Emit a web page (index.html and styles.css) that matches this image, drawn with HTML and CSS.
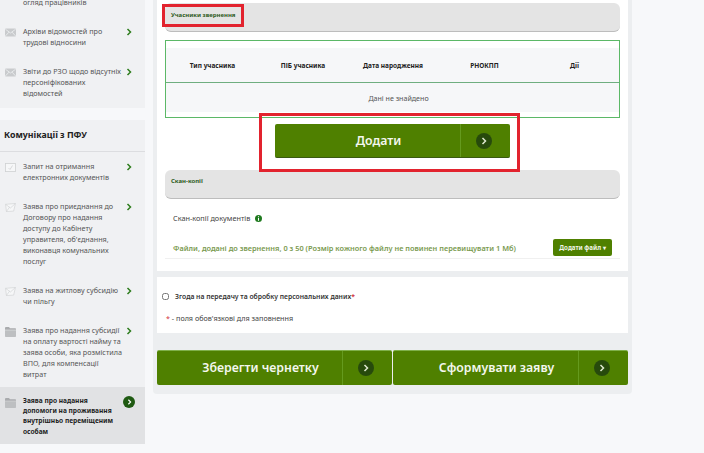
FILE: index.html
```html
<!DOCTYPE html>
<html>
<head>
    <title>Заява</title>
    <meta http-equiv="Content-Type" content="text/html; charset=UTF-8">
    <link rel="stylesheet" href="styles.css">
</head>
<body>
    <svg class="defs" width="0" height="0">
        <symbol id="i-mail" viewBox="0 0 11 8">
            <rect width="11" height="8" rx="1" fill="#c9cbcd"/>
            <path d="M0.5 0.8 5.5 4.5 10.5 0.8M0.5 7.4 4 3.6M10.5 7.4 7 3.6" fill="none" stroke="#eef0f1" stroke-width="0.8"/>
        </symbol>
        <symbol id="i-open" viewBox="0 0 12 10">
            <path d="M0.5 1.5 11.5 0.5 9.5 9 1.5 9.5Z" fill="#f6f7f8" stroke="#cfd1d3" stroke-width="0.7"/>
            <path d="M0.5 1.5 6 5.5 11.5 0.5M1.5 9.5 5 4.5" fill="none" stroke="#cfd1d3" stroke-width="0.7"/>
        </symbol>
        <symbol id="i-doc" viewBox="0 0 11 9">
            <rect x="0.4" y="0.4" width="10.2" height="8.2" fill="#f6f7f8" stroke="#cfd1d3" stroke-width="0.8"/>
            <path d="M3.5 5 5 6.5 7.5 2.5" fill="none" stroke="#cfd1d3" stroke-width="0.8"/>
        </symbol>
        <symbol id="i-folder" viewBox="0 0 11 10">
            <path d="M0 1.2C0 0.5 0.5 0 1.2 0H4L5 1.2H10C10.6 1.2 11 1.6 11 2.2V2.8H0Z" fill="#a9abad"/>
            <path d="M0 3.3H11V9C11 9.6 10.6 10 10 10H1C0.4 10 0 9.6 0 9Z" fill="#bdbfc1"/>
        </symbol>
        <symbol id="i-chev" viewBox="0 0 6 8">
            <path d="M1.5 1 4.5 4 1.5 7" fill="none" stroke="currentColor" stroke-width="1.5"/>
        </symbol>
    </svg>

    <aside class="sidebar">
        <section class="side-box">
            <div class="side-item">
                <span class="side-icon"></span>
                <span class="side-text">огляд працівників</span>
            </div>
            <div class="side-item">
                <span class="side-icon"><svg class="ic-mail"><use href="#i-mail"/></svg></span>
                <span class="side-text">Архіви відомостей про<br>трудові відносини</span>
                <svg class="chev"><use href="#i-chev"/></svg>
            </div>
            <div class="side-item">
                <span class="side-icon"><svg class="ic-mail"><use href="#i-mail"/></svg></span>
                <span class="side-text">Звіти до РЗО щодо відсутніх<br>персоніфікованих<br>відомостей</span>
                <svg class="chev"><use href="#i-chev"/></svg>
            </div>
        </section>

        <section class="side-box side-box-2">
            <h3 class="side-title">Комунікації з ПФУ</h3>
            <div class="side-item">
                <span class="side-icon"><svg class="ic-mail"><use href="#i-doc"/></svg></span>
                <span class="side-text">Запит на отримання<br>електронних документів</span>
                <svg class="chev"><use href="#i-chev"/></svg>
            </div>
            <div class="side-item">
                <span class="side-icon"><svg class="ic-mail"><use href="#i-open"/></svg></span>
                <span class="side-text">Заява про приєднання до<br>Договору про надання<br>доступу до Кабінету<br>управителя, об'єднання,<br>виконавця комунальних<br>послуг</span>
                <svg class="chev"><use href="#i-chev"/></svg>
            </div>
            <div class="side-item">
                <span class="side-icon"><svg class="ic-mail"><use href="#i-open"/></svg></span>
                <span class="side-text">Заява на житлову субсидію<br>чи пільгу</span>
                <svg class="chev"><use href="#i-chev"/></svg>
            </div>
            <div class="side-item">
                <span class="side-icon"><svg class="ic-folder"><use href="#i-folder"/></svg></span>
                <span class="side-text">Заява про надання субсидії<br>на оплату вартості найму та<br>заява особи, яка розмістила<br>ВПО, для компенсації<br>витрат</span>
                <svg class="chev"><use href="#i-chev"/></svg>
            </div>
            <div class="side-item active">
                <span class="side-icon"><svg class="ic-folder"><use href="#i-folder"/></svg></span>
                <span class="side-text">Заява про надання<br>допомоги на проживання<br>внутрішньо переміщеним<br>особам</span>
                <span class="round-chev small"><svg class="chev"><use href="#i-chev"/></svg></span>
            </div>
        </section>
    </aside>

    <main class="content">
        <div class="panel panel-main">
            <div class="block-head">
                <span>Учасники звернення</span>
                <div class="red-mark mark-head"></div>
            </div>

            <div class="grid-box">
                <div class="grid-row grid-top">
                    <b>Тип учасника</b>
                    <b>ПІБ учасника</b>
                    <b>Дата народження</b>
                    <b>РНОКПП</b>
                    <b>Дії</b>
                </div>
                <div class="grid-empty">Дані не знайдено</div>
            </div>

            <div class="add-row">
                <button class="btn-big add-btn">
                    <span class="btn-label">Додати</span>
                    <span class="btn-arrow"><span class="round-chev"><svg class="chev"><use href="#i-chev"/></svg></span></span>
                </button>
                <div class="red-mark mark-add"></div>
            </div>

            <div class="block-head block-head-2">
                <span>Скан-копії</span>
            </div>

            <div class="scan-title">
                Скан-копії документів
                <svg class="info" viewBox="0 0 8 8"><circle cx="4" cy="4" r="4" fill="#1f7a1f"/><path d="M4 1.5V2.5M4 3.4V6.5" stroke="#fff" stroke-width="1.2"/></svg>
            </div>

            <div class="files-row">
                <span class="files-text">Файли, додані до звернення, 0 з 50 (Розмір кожного файлу не повинен перевищувати 1 Мб)</span>
                <button class="btn-small">Додати файл ▾</button>
            </div>
        </div>

        <div class="panel panel-agree">
            <label class="agree">
                <input type="checkbox">
                <span>Згода на передачу та обробку персональних даних<i>*</i></span>
            </label>
            <div class="required"><i>*</i> - поля обов'язкові для заповнення</div>
        </div>

        <div class="actions">
            <button class="btn-big">
                <span class="btn-label">Зберегти чернетку</span>
                <span class="btn-arrow"><span class="round-chev"><svg class="chev"><use href="#i-chev"/></svg></span></span>
            </button>
            <button class="btn-big">
                <span class="btn-label">Сформувати заяву</span>
                <span class="btn-arrow"><span class="round-chev"><svg class="chev"><use href="#i-chev"/></svg></span></span>
            </button>
        </div>
    </main>
</body>
</html>
```

FILE: styles.css
```css
html, body {
    height: 100%;
}
body {
    display: flex;
    align-items: flex-start;
    margin: 0;
    height: 453px;
    overflow: hidden;
    background: #f7f8fa;
    color: #333;
    font-family: "Noto Sans", "Open Sans", sans-serif;
    font-size: 7.2px;
}
.defs {
    position: absolute;
}

/* sidebar */
.sidebar {
    flex: none;
    width: 145px;
    margin-top: -3px;
}
.side-box {
    background: #f0f1f3;
}
.side-box-2 {
    margin-top: 12px;
}
.side-title {
    margin: 0;
    padding: 7px 4px;
    height: 17px;
    line-height: 17px;
    font-size: 8.8px;
    font-weight: 700;
    color: #222;
    border-bottom: 1px solid #dcdde0;
}
.side-item {
    display: flex;
    align-items: flex-start;
    padding: 9px 13px 9px 5px;
    line-height: 11px;
    color: #555;
}
.side-box > .side-item:first-child {
    padding-top: 0;
}
.side-icon {
    flex: none;
    width: 18px;
    padding-top: 2px;
}
.side-text {
    flex: 1;
    white-space: nowrap;
}
.ic-mail {
    display: block;
    width: 11px;
    height: 9px;
}
.ic-folder {
    display: block;
    width: 11px;
    height: 10px;
}
.chev {
    flex: none;
    width: 6px;
    height: 8px;
    margin: 2px 0 0 4px;
    color: #2f7d1e;
}
.side-item.active {
    margin-top: -2px;
    padding: 9px 10px 7px 5px;
    background: #e1e2e4;
    line-height: 10.2px;
    font-size: 6.6px;
    font-weight: 700;
    color: #222;
}
.round-chev {
    display: flex;
    flex: none;
    align-items: center;
    justify-content: center;
    width: 16px;
    height: 16px;
    border-radius: 50%;
    background: #274a0c;
}
.round-chev .chev {
    margin: 0;
    color: #dfe8d0;
}
.round-chev.small {
    width: 12px;
    height: 12px;
    margin: 0;
    background: #1f5a12;
}
.round-chev.small .chev {
    width: 5px;
    height: 6px;
    color: #fff;
}

/* main column */
.content {
    flex: none;
    width: 471px;
    margin-left: 8px;
    padding: 0 4px 9px;
    background: #eceef0;
    border-radius: 0 0 4px 4px;
}
.panel {
    background: #fff;
}
.panel-main {
    position: relative;
    height: 268px;
    padding: 3px 8px 0 8px;
}
.panel-agree {
    margin-top: 6px;
    height: 56px;
    padding: 0 5px;
}
.block-head {
    position: relative;
    height: 28px;
    padding-left: 6px;
    background: #e4e4e4;
    border-bottom: 1px solid #bdbdbd;
    border-radius: 6px;
    font-size: 6px;
    font-weight: 700;
    line-height: 24px;
    color: #2d5a1b;
}
.block-head-2 {
    margin-top: 12px;
    line-height: 22px;
}
.red-mark {
    position: absolute;
    z-index: 2;
    box-sizing: border-box;
    border: 3px solid #e2232e;
    pointer-events: none;
}
.mark-head {
    left: -3px;
    top: 1px;
    width: 82px;
    height: 23px;
}
.mark-add {
    left: 94px;
    top: -11px;
    width: 261px;
    height: 59px;
}

/* participants table */
.grid-box {
    margin-top: 8px;
    height: 76px;
    border: 1px solid #5cb867;
    background: #fff;
}
.grid-row {
    display: grid;
    grid-template-columns: 93px 88px 92px 91px 89px;
    align-items: center;
    height: 34px;
    margin-top: 7px;
    background: #f6f7f9;
    border-bottom: 1px solid #6fae80;
    text-align: center;
    font-size: 6.5px;
    color: #222;
}
.grid-empty {
    height: 28px;
    padding: 1px 0 0 12px;
    line-height: 28px;
    background: #f6f7f9;
    text-align: center;
    font-size: 7.1px;
    color: #555;
}

/* buttons */
.btn-big {
    display: flex;
    flex: none;
    align-items: stretch;
    width: 235px;
    height: 35px;
    padding: 0;
    border: none;
    border-top: 1px solid #7fb04a;
    border-radius: 2px;
    background: #4f8000;
    color: #f4f7ee;
    font-family: inherit;
    font-size: 12.3px;
    font-weight: 600;
}
.btn-label {
    flex: 1;
    padding-left: 22px;
    line-height: 33px;
    text-align: center;
}
.btn-arrow {
    display: flex;
    flex: none;
    align-items: center;
    justify-content: center;
    box-sizing: border-box;
    width: 50px;
    padding-right: 4px;
    border-left: 1px solid #659a1e;
}
.add-row {
    position: relative;
    margin-top: 6px;
    padding-left: 110px;
}
.add-btn {
    height: 34px;
    border: none;
    border-bottom: 1px solid #3a5a12;
}
.scan-title {
    display: flex;
    align-items: center;
    gap: 5px;
    margin-top: 13px;
    padding-left: 8px;
    height: 12px;
    font-size: 7.3px;
    color: #444;
}
.info {
    width: 7px;
    height: 7px;
}
.files-row {
    display: flex;
    align-items: center;
    justify-content: space-between;
    margin-top: 15px;
    padding: 0 8px 2px;
    border-bottom: 1px solid #f0f0f0;
}
.files-text {
    font-size: 7.4px;
    font-weight: 600;
    color: #7a9a50;
    white-space: nowrap;
}
.btn-small {
    width: 59px;
    height: 17px;
    padding: 0;
    border: none;
    border-radius: 2px;
    background: #4f8000;
    color: #f2f6e8;
    font-family: inherit;
    font-size: 6.2px;
    font-weight: 700;
}

/* consent */
.agree {
    display: flex;
    align-items: center;
    gap: 6px;
    padding-top: 13px;
    height: 12px;
    font-size: 6.8px;
    font-weight: 600;
    color: #333;
}
.agree input {
    width: 7px;
    height: 7px;
    margin: 0;
}
.agree i, .required i {
    font-style: normal;
    color: #d2323c;
}
.required {
    margin-top: 10px;
    padding-left: 4px;
    line-height: 12px;
    font-size: 7.2px;
    color: #444;
}
.actions {
    display: flex;
    gap: 1px;
    margin-top: 17px;
}
```
